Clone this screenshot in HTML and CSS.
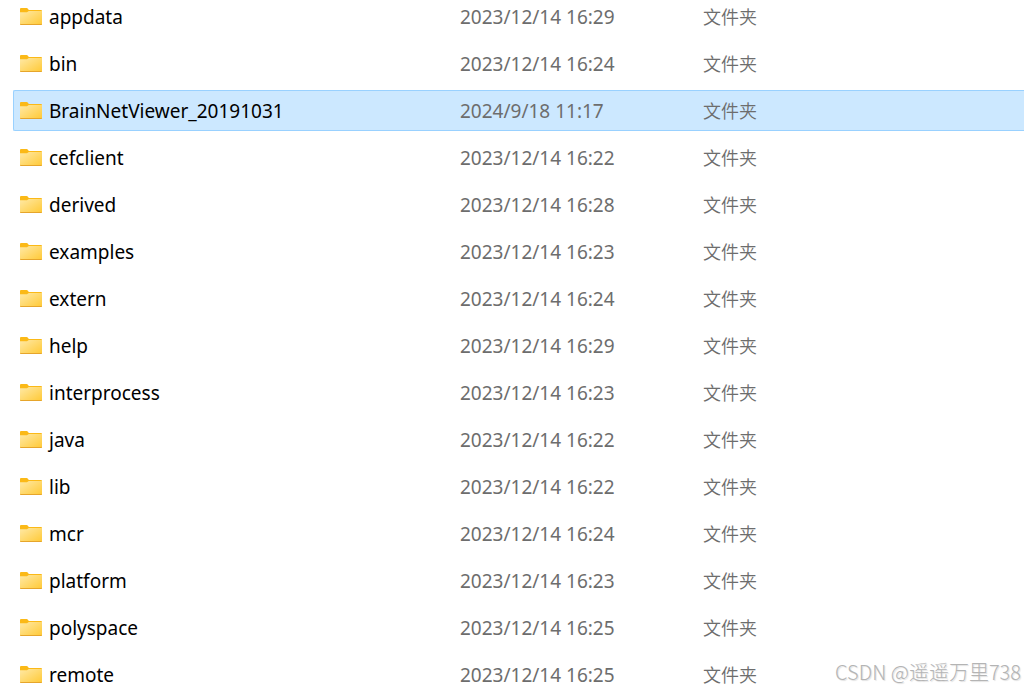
FILE: index.html
```html
<!DOCTYPE html>
<html lang="zh-CN">
<head>
    <meta charset="UTF-8">
    <meta name="viewport" content="width=device-width, initial-scale=1.0">
    <title>文件夹</title>
    <link rel="stylesheet" href="styles.css">
</head>
<body>
    <svg class="defs" aria-hidden="true">
        <defs>
            <linearGradient id="folderFill" x1="0" y1="0" x2="1" y2="1">
                <stop offset="0" stop-color="#ffe9a6"/>
                <stop offset="1" stop-color="#ffc935"/>
            </linearGradient>
        </defs>
        <symbol id="folder" viewBox="0 0 22 17">
            <path d="M0 1Q0 0 1 0H6.6Q7.3 0 7.7 .6L8.8 2H21Q22 2 22 3V8H0Z" fill="#fbb917"/>
            <path d="M0 4.2H7L8.8 3H22V16Q22 17 21 17H1Q0 17 0 16Z" fill="url(#folderFill)"/>
            <path d="M0 15.5Q0 16 1 16H21Q22 16 22 15.5V16Q22 17 21 17H1Q0 17 0 16Z" fill="#e6a52b"/>
        </symbol>
    </svg>
    <div class="explorer">
        <table class="file-list">
            <colgroup>
                <col class="col-name">
                <col class="col-date">
                <col>
            </colgroup>
            <tbody>
                <tr><td><svg class="icon"><use href="#folder"/></svg>appdata</td><td>2023/12/14 16:29</td><td>文件夹</td></tr>
                <tr><td><svg class="icon"><use href="#folder"/></svg>bin</td><td>2023/12/14 16:24</td><td>文件夹</td></tr>
                <tr class="selected"><td><svg class="icon"><use href="#folder"/></svg>BrainNetViewer_20191031</td><td>2024/9/18 11:17</td><td>文件夹</td></tr>
                <tr><td><svg class="icon"><use href="#folder"/></svg>cefclient</td><td>2023/12/14 16:22</td><td>文件夹</td></tr>
                <tr><td><svg class="icon"><use href="#folder"/></svg>derived</td><td>2023/12/14 16:28</td><td>文件夹</td></tr>
                <tr><td><svg class="icon"><use href="#folder"/></svg>examples</td><td>2023/12/14 16:23</td><td>文件夹</td></tr>
                <tr><td><svg class="icon"><use href="#folder"/></svg>extern</td><td>2023/12/14 16:24</td><td>文件夹</td></tr>
                <tr><td><svg class="icon"><use href="#folder"/></svg>help</td><td>2023/12/14 16:29</td><td>文件夹</td></tr>
                <tr><td><svg class="icon"><use href="#folder"/></svg>interprocess</td><td>2023/12/14 16:23</td><td>文件夹</td></tr>
                <tr><td><svg class="icon"><use href="#folder"/></svg>java</td><td>2023/12/14 16:22</td><td>文件夹</td></tr>
                <tr><td><svg class="icon"><use href="#folder"/></svg>lib</td><td>2023/12/14 16:22</td><td>文件夹</td></tr>
                <tr><td><svg class="icon"><use href="#folder"/></svg>mcr</td><td>2023/12/14 16:24</td><td>文件夹</td></tr>
                <tr><td><svg class="icon"><use href="#folder"/></svg>platform</td><td>2023/12/14 16:23</td><td>文件夹</td></tr>
                <tr><td><svg class="icon"><use href="#folder"/></svg>polyspace</td><td>2023/12/14 16:25</td><td>文件夹</td></tr>
                <tr><td><svg class="icon"><use href="#folder"/></svg>remote</td><td>2023/12/14 16:25</td><td>文件夹</td></tr>
            </tbody>
        </table>
    </div>
    <div class="watermark">CSDN @遥遥万里738</div>
</body>
</html>
```
FILE: styles.css
```css
body, html {
    margin: 0;
    padding: 0;
    height: 100%;
    background-color: #fff;
    font-family: 'Noto Sans', 'Noto Sans CJK SC', sans-serif;
}
body {
    position: relative;
    overflow: hidden;
}
.defs {
    position: absolute;
    width: 0;
    height: 0;
}
.explorer {
    height: 100%;
    padding-left: 13px;
    box-sizing: border-box;
    overflow: hidden;
}
/* list is scrolled a little past its top edge */
.file-list {
    width: 100%;
    margin-top: -10px;
    table-layout: fixed;
    border-collapse: separate;
    border-spacing: 0 6px;
}
.col-name { width: 447px; }
.col-date { width: 243px; }
.file-list td {
    height: 37px;
    padding: 2px 0 0;
    border: 1px solid transparent;
    border-left-width: 0;
    border-right-width: 0;
    font-size: 19px;
    line-height: 37px;
    color: #6d6d6d;
    white-space: nowrap;
}
.file-list td:first-child {
    padding-left: 6px;
    border-left-width: 1px;
    border-radius: 2px 0 0 2px;
    color: #000;
}
.file-list td:last-child {
    padding: 0;
    font-family: 'Noto Sans CJK SC', sans-serif;
    font-size: 18px;
    font-weight: 350;
}
.file-list .selected td {
    background-color: #cce8ff;
    border-color: #99d1ff;
}
.icon {
    width: 22px;
    height: 17px;
    margin-right: 7px;
    vertical-align: -1px;
}
.watermark {
    position: absolute;
    right: 3px;
    bottom: 5px;
    font-family: 'Noto Sans CJK SC', sans-serif;
    font-size: 20px;
    font-weight: 300;
    line-height: 28px;
    color: #b4b4b4;
    text-shadow: 1px 1px 1px #e0e0e0;
}
```
